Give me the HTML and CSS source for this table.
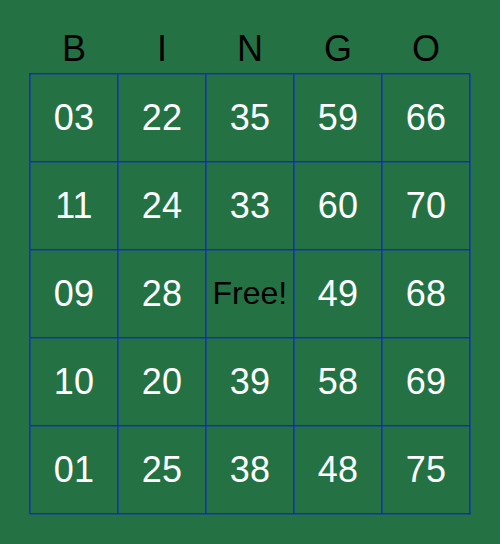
FILE: index.html
```html
<!DOCTYPE html>
<html lang="en">
<head>
    <meta charset="UTF-8">
    <title>Bingo Card</title>
    <link rel="stylesheet" href="styles.css">
</head>
<body>

<div class="card">
    <div class="heading">
        <span>B</span><span>I</span><span>N</span><span>G</span><span>O</span>
    </div>

    <div class="board">
        <div class="cell">03</div><div class="cell">22</div><div class="cell">35</div><div class="cell">59</div><div class="cell">66</div>
        <div class="cell">11</div><div class="cell">24</div><div class="cell">33</div><div class="cell">60</div><div class="cell">70</div>
        <div class="cell">09</div><div class="cell">28</div><div class="cell free">Free!</div><div class="cell">49</div><div class="cell">68</div>
        <div class="cell">10</div><div class="cell">20</div><div class="cell">39</div><div class="cell">58</div><div class="cell">69</div>
        <div class="cell">01</div><div class="cell">25</div><div class="cell">38</div><div class="cell">48</div><div class="cell">75</div>
    </div>
</div>

</body>
</html>
```

FILE: styles.css
```css
/* Page */
body {
    margin: 0;
    background-color: #247243;
    font-family: 'Liberation Sans', Arial, sans-serif;
    height: 544px;
}

.card {
    width: 442px;
    margin-left: 29px;
}

/* B I N G O */
.heading {
    display: grid;
    grid-template-columns: repeat(5, 88px);
    padding-left: 1px;
    height: 72px;
    box-sizing: border-box;
    padding-top: 31px;
    font-size: 36px;
    line-height: 36px;
    color: #000;
    text-align: center;
}

/* Grid of numbers */
.board {
    display: grid;
    grid-template-columns: repeat(5, 88px);
    grid-auto-rows: 88px;
    width: 440px;
    border-left: 1px solid #0c10ff;
    border-top: 1px solid #0c10ff;
    margin-top: 1px;
    /* lines sit between pixels in the original card */
    transform: translate(0.4px, 0.3px);
}

.cell {
    display: flex;
    align-items: center;
    justify-content: center;
    border-right: 1px solid #0c10ff;
    border-bottom: 1px solid #0c10ff;
    font-size: 36px;
    color: #fff;
}

.cell.free {
    font-size: 32px;
    color: #000;
}
```
